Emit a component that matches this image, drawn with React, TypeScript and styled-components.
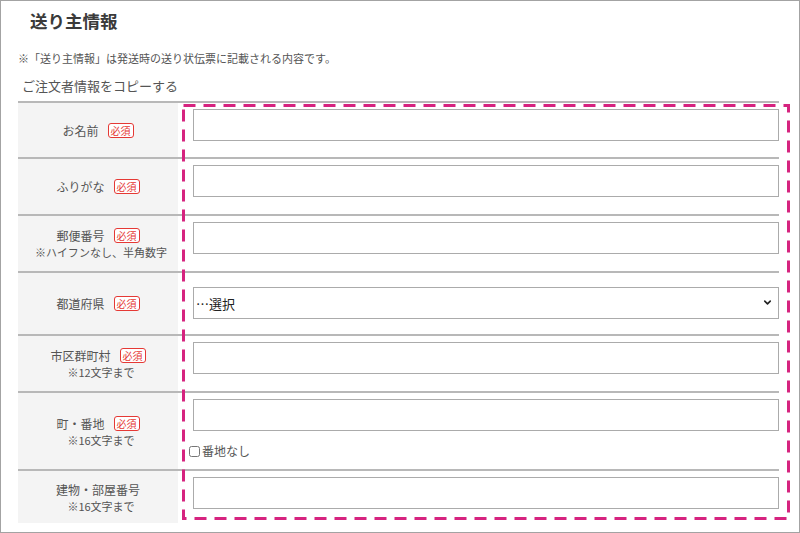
import React from "react";
import styled, { createGlobalStyle } from "styled-components";
import { ChevronDown } from "lucide-react";

const GlobalStyle = createGlobalStyle`
  html, body {
    margin: 0;
    padding: 0;
    background: #ffffff;
  }
  body {
    font-family: "Noto Sans CJK JP", "Noto Sans", "Liberation Sans", sans-serif;
    color: #555555;
  }
  * {
    box-sizing: border-box;
  }
`;

const Frame = styled.div`
  width: 800px;
  height: 533px;
  border: 1px solid #a3a3a3;
  padding: 0 20px 0 17px;
  overflow: hidden;
`;

const Title = styled.h2`
  margin: 0 0 0 12px;
  padding-top: 8px;
  font-size: 17.5px;
  line-height: 24px;
  font-weight: 700;
  color: #3a3a3a;
`;

const Note = styled.p`
  margin: 17px 0 0;
  font-size: 11px;
  line-height: 16px;
  color: #555555;
`;

const CopyLink = styled.div`
  margin: 10px 0 0 4px;
  font-size: 13px;
  line-height: 20px;
  color: #555555;
`;

const Table = styled.div`
  position: relative;
  margin-top: 5px;
`;

const Row = styled.div<{ $height: number }>`
  display: grid;
  grid-template-columns: 160px 1fr;
  height: ${(p) => p.$height}px;
  border-top: 2px solid #b8b8b8;
`;

const LabelCell = styled.div`
  background: #f4f4f4;
  display: flex;
  flex-direction: column;
  align-items: center;
  justify-content: center;
  text-align: center;
  font-size: 12px;
  line-height: 17px;
  color: #555555;
`;

const LabelLine = styled.div`
  display: flex;
  align-items: center;
  gap: 9px;
`;

const SubText = styled.div`
  font-size: 11px;
  line-height: 16px;
  padding-left: 6px;
`;

const Required = styled.span`
  display: inline-block;
  border: 1px solid #e53935;
  border-radius: 3px;
  color: #e53935;
  background: #ffffff;
  font-size: 10px;
  line-height: 13px;
  padding: 0 2px;
`;

const InputCell = styled.div<{ $top?: number }>`
  padding: ${(p) => p.$top ?? 6}px 0 0 15px;
  display: flex;
  flex-direction: column;
`;

const TextInput = styled.input`
  width: 100%;
  height: 32px;
  border: 1px solid #ababab;
  border-radius: 0;
  padding: 0 6px;
  font-size: 13px;
  font-family: inherit;
  background: #ffffff;
  outline: none;
`;

const SelectWrap = styled.div`
  position: relative;
`;

const Select = styled.select`
  appearance: none;
  width: 100%;
  height: 32px;
  border: 1px solid #ababab;
  border-radius: 0;
  padding: 0 2px;
  font-size: 13px;
  font-family: inherit;
  color: #222222;
  background: #ffffff;
`;

const Chevron = styled.span`
  position: absolute;
  right: 6px;
  top: 10px;
  display: flex;
  pointer-events: none;
  color: #222222;
`;

const CheckLabel = styled.label`
  display: flex;
  align-items: center;
  margin: 12px 0 0 -4px;
  font-size: 12px;
  line-height: 16px;
  color: #555555;

  input {
    width: 11px;
    height: 11px;
    margin: 0 2px 0 0;
  }
`;

const DashedMark = styled.svg`
  position: absolute;
  left: 164px;
  top: 3px;
  pointer-events: none;
  overflow: visible;
`;

type Field = {
  label: string;
  sub?: string;
  required: boolean;
  height: number;
  kind: "text" | "select" | "street";
};

const fields: Field[] = [
  { label: "お名前", required: true, height: 56, kind: "text" },
  { label: "ふりがな", required: true, height: 57, kind: "text" },
  { label: "郵便番号", sub: "※ハイフンなし、半角数字", required: true, height: 57, kind: "text" },
  { label: "都道府県", required: true, height: 63, kind: "select" },
  { label: "市区群町村", sub: "※12文字まで", required: true, height: 57, kind: "text" },
  { label: "町・番地", sub: "※16文字まで", required: true, height: 78, kind: "street" },
  { label: "建物・部屋番号", sub: "※16文字まで", required: false, height: 54, kind: "text" },
];

const App: React.FC = () => {
  return (
    <>
      <GlobalStyle />
      <Frame>
        <Title>送り主情報</Title>
        <Note>※「送り主情報」は発送時の送り状伝票に記載される内容です。</Note>
        <CopyLink>ご注文者情報をコピーする</CopyLink>
        <Table>
          {fields.map((f) => (
            <Row key={f.label} $height={f.height}>
              <LabelCell>
                <LabelLine>
                  <span>{f.label}</span>
                  {f.required && <Required>必須</Required>}
                </LabelLine>
                {f.sub && <SubText>{f.sub}</SubText>}
              </LabelCell>
              {f.kind === "select" ? (
                <InputCell $top={14}>
                  <SelectWrap>
                    <Select defaultValue="">
                      <option value="">…選択</option>
                    </Select>
                    <Chevron>
                      <ChevronDown size={11} strokeWidth={3.5} />
                    </Chevron>
                  </SelectWrap>
                </InputCell>
              ) : (
                <InputCell>
                  <TextInput type="text" />
                  {f.kind === "street" && (
                    <CheckLabel>
                      <input type="checkbox" />
                      番地なし
                    </CheckLabel>
                  )}
                </InputCell>
              )}
            </Row>
          ))}
          <DashedMark width={608} height={416}>
            <rect
              x={1.5}
              y={1.5}
              width={605}
              height={413}
              fill="none"
              stroke="#d6237f"
              strokeWidth={3}
              strokeDasharray="12 8"
            />
          </DashedMark>
        </Table>
      </Frame>
    </>
  );
};

export default App;
